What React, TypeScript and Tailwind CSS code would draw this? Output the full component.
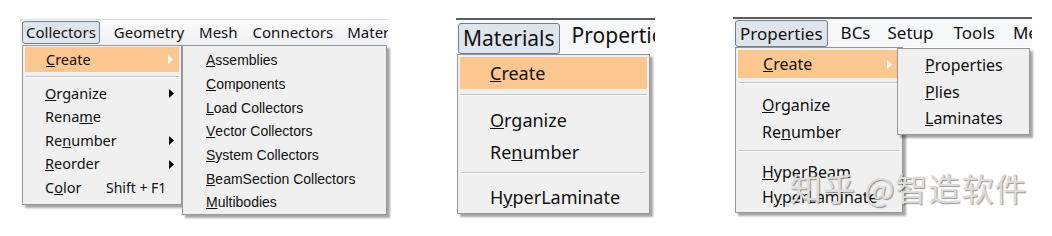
import React from 'react'

const seg = "font-['Noto_Sans',sans-serif]"
const ari = "font-['Liberation_Sans',Arial,sans-serif]"

function Arrow({ white = false }: { white?: boolean }) {
  return (
    <svg width="5" height="9" viewBox="0 0 5 9" className="shrink-0">
      <path d="M0 0 L5 4.5 L0 9 Z" fill={white ? '#ffffff' : '#000000'} />
    </svg>
  )
}

function Sep({ className = '' }: { className?: string }) {
  return <div className={`border-t border-[#c5c5c5] border-b-white border-b ${className}`} />
}

// 面板 1：Collectors
function PanelCollectors() {
  const rows: [React.ReactNode, boolean, string?][] = [
    [<><u>O</u>rganize</>, true],
    [<>Rena<u>m</u>e</>, false],
    [<>Re<u>n</u>umber</>, true],
    [<><u>R</u>eorder</>, true],
    [<>C<u>o</u>lor</>, false, 'Shift + F1'],
  ]
  const sub = ['Assemblies', 'Components', 'Load Collectors', 'Vector Collectors', 'System Collectors', 'BeamSection Collectors', 'Multibodies']
  return (
    <div className="relative w-[368px] ml-[20px] mt-[19px]">
      <div className={`flex items-center h-[26px] bg-gradient-to-b from-[#fbfbfc] to-[#eef0f3] border-t border-[#d8dbe0] text-[15px] text-[#111] ${seg} overflow-hidden whitespace-nowrap`}>
        <div className="ml-[2px] h-[23px] px-[3px] flex items-center rounded-[3px] border border-[#6f7f90] bg-[#dfe5ec]">Collectors</div>
        <span className="ml-[14px]">Geometry</span>
        <span className="ml-[15px]">Mesh</span>
        <span className="ml-[15px]">Connectors</span>
        <span className="ml-[14px]">Materials</span>
      </div>
      <div className={`ml-[2px] w-[160px] h-[160px] bg-[#f0f0f0] border border-[#979797] shadow-[3px_3px_2px_rgba(0,0,0,0.35)] text-[14.5px] text-[#111] ${seg} pt-[1px]`}>
        <div className="mx-[2px] h-[25px] bg-[#fcc790] flex items-center pl-[21px] pr-[6px] justify-between">
          <span><u>C</u>reate</span>
          <Arrow white />
        </div>
        <Sep className="mx-[2px] mt-[4px]" />
        <div className="mt-[4px]">
          {rows.map(([label, arrow, sc], i) => (
            <div key={i} className="h-[23.5px] flex items-center pl-[22px] pr-[7px]">
              <span className="w-[61px] whitespace-nowrap">{label}</span>
              {sc && <span className="text-[14px]">{sc}</span>}
              <div className="flex-1" />
              {arrow && <Arrow />}
            </div>
          ))}
        </div>
      </div>
      <div className={`absolute left-[162px] top-[26px] w-[205px] h-[170px] bg-[#f0f0f0] border border-[#979797] shadow-[3px_3px_2px_rgba(0,0,0,0.35)] text-[14px] text-[#111] ${ari} pt-[3px]`}>
        {sub.map((s) => (
          <div key={s} className="h-[23.7px] flex items-center pl-[23px] whitespace-nowrap">
            <u>{s[0]}</u>
            {s.slice(1)}
          </div>
        ))}
      </div>
    </div>
  )
}

// 面板 2：Materials
function PanelMaterials() {
  return (
    <div className="relative w-[199px] ml-[68px] mt-[18px]">
      <div className={`flex items-end h-[36px] bg-[#f7f8f9] border-t-2 border-[#5c5c5c] text-[21px] text-[#111] ${seg} overflow-hidden whitespace-nowrap`}>
        <div className="ml-[2px] h-[31px] px-[4px] flex items-center rounded-[3px] border border-[#6f7f90] bg-[#dfe5ec]">Materials</div>
        <span className="ml-[12px] mb-[3px]">Properties</span>
      </div>
      <div className={`ml-[1px] w-[193px] h-[160px] bg-[#f0f0f0] border border-[#979797] shadow-[3px_3px_2px_rgba(0,0,0,0.35)] text-[18px] text-[#111] ${seg} pt-[2px]`}>
        <div className="mx-[2px] h-[32px] bg-[#fcc790] flex items-center pl-[30px]">
          <span><u>C</u>reate</span>
        </div>
        <Sep className="mx-[2px] mt-[5px]" />
        <div className="h-[32px] mt-[8px] flex items-center pl-[32px]"><span><u>O</u>rganize</span></div>
        <div className="h-[32px] flex items-center pl-[32px]"><span>Re<u>n</u>umber</span></div>
        <Sep className="mx-[4px] mt-[4px]" />
        <div className="h-[32px] mt-[7px] flex items-center pl-[32px]"><span>H<u>y</u>perLaminate</span></div>
      </div>
    </div>
  )
}

// 面板 3：Properties
function PanelProperties() {
  const sub: [string, string][] = [['P', 'roperties'], ['P', 'lies'], ['L', 'aminates']]
  return (
    <div className="relative w-[299px] ml-[78px] mt-[17px]">
      <div className={`flex items-end h-[30px] bg-[#f7f8f9] border-t-2 border-[#5c5c5c] text-[17px] text-[#111] ${seg} overflow-hidden whitespace-nowrap`}>
        <div className="ml-[2px] h-[27px] px-[4px] flex items-center rounded-[3px] border border-[#6f7f90] bg-[#dfe5ec]">Properties</div>
        <span className="ml-[13px] mb-[2px]">BCs</span>
        <span className="ml-[17px] mb-[2px]">Setup</span>
        <span className="ml-[20px] mb-[2px]">Tools</span>
        <span className="ml-[18px] mb-[2px]">Mesh</span>
      </div>
      <div className={`ml-[2px] w-[168px] h-[166px] bg-[#f0f0f0] border border-[#979797] shadow-[3px_3px_2px_rgba(0,0,0,0.35)] text-[16px] text-[#111] ${seg} pt-[2px]`}>
        <div className="mx-[2px] h-[28px] bg-[#fcc790] flex items-center pl-[25px] pr-[8px] justify-between">
          <span><u>C</u>reate</span>
          <Arrow white />
        </div>
        <Sep className="mx-[2px] mt-[4px]" />
        <div className="h-[27px] mt-[7px] flex items-center pl-[26px]"><span><u>O</u>rganize</span></div>
        <div className="h-[27px] flex items-center pl-[26px]"><span>Re<u>n</u>umber</span></div>
        <Sep className="mx-[2px] mt-[5px]" />
        <div className="h-[25px] mt-[7px] flex items-center pl-[26px]"><span><u>H</u>yperBeam</span></div>
        <div className="h-[25px] flex items-center pl-[26px]"><span>H<u>y</u>perLaminate</span></div>
      </div>
      <div className={`absolute left-[164px] top-[31px] w-[133px] h-[87px] bg-[#f0f0f0] border border-[#979797] shadow-[3px_3px_2px_rgba(0,0,0,0.35)] text-[16px] text-[#111] ${seg} pt-[3px]`}>
        {sub.map(([a, b]) => (
          <div key={b} className="h-[26.5px] flex items-center pl-[27px]">
            <u>{a}</u>
            {b}
          </div>
        ))}
      </div>
      <div className="absolute left-[57px] top-[154px] text-[32px] tracking-[1px] leading-none text-[#dcdcdc] font-['Noto_Sans_CJK_SC','Noto_Sans',sans-serif] [text-shadow:1px_1px_1px_rgba(0,0,0,0.4)] whitespace-nowrap">
        知乎 @智造软件
      </div>
    </div>
  )
}

export default function App() {
  return (
    <div className="w-[1052px] h-[236px] bg-white flex items-start overflow-hidden">
      <PanelCollectors />
      <PanelMaterials />
      <PanelProperties />
    </div>
  )
}
